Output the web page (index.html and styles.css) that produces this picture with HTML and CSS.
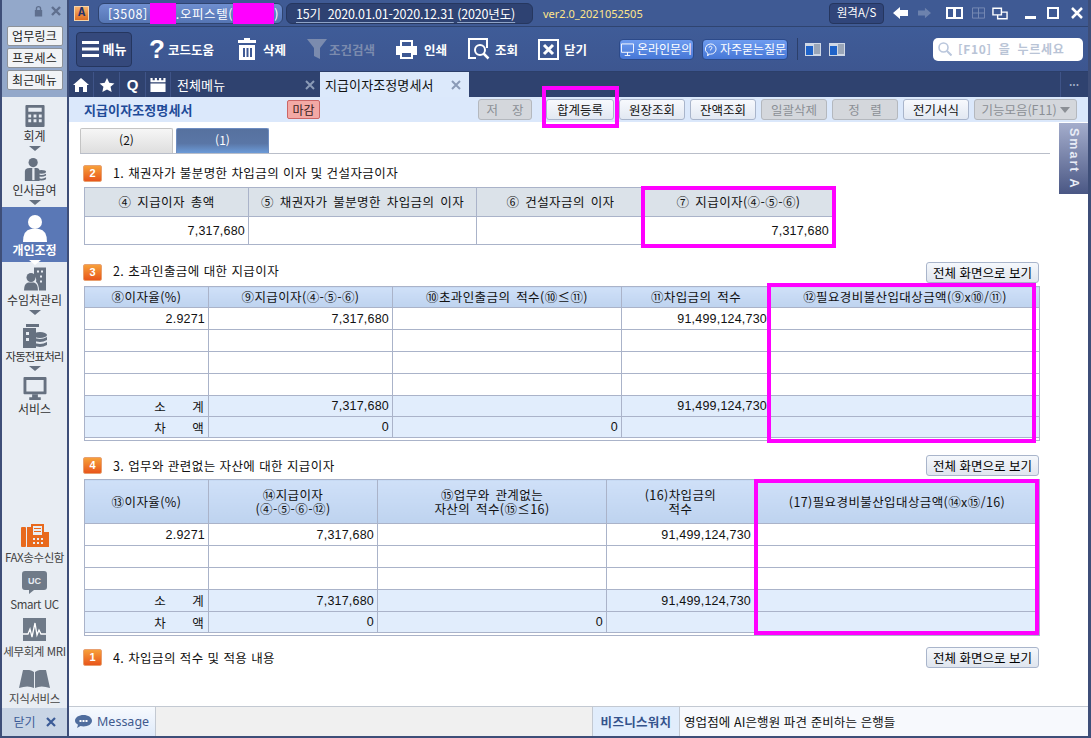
FILE: index.html
```html
<!DOCTYPE html>
<html lang="ko">
<head>
<meta charset="utf-8">
<title>지급이자조정명세서</title>
<link rel="stylesheet" href="styles.css">
</head>
<body>
<div class="app">
  <aside class="side">
    <div class="side-top">
      <div class="side-ctl">
        <svg class="i-lock" viewBox="0 0 12 12"><path d="M3 5V3.500a3 3 0 0 1 6 0V5h1v7H2V5zm1.500 0h3V3.500a1.500 1.500 0 0 0-3 0z"/></svg>
        <svg class="i-cross" viewBox="0 0 10 10"><path d="M1 1l8 8M9 1L1 9"/></svg>
      </div>
      <button class="side-btn">업무링크</button>
      <button class="side-btn">프로세스</button>
      <button class="side-btn">최근메뉴</button>
    </div>
    <nav class="side-nav">
      <div class="nav h-48">
        <svg class="ni ni-calc" viewBox="0 0 20 23"><path fill-rule="evenodd" d="M1 0h18a1 1 0 0 1 1 1v21a1 1 0 0 1-1 1H1a1 1 0 0 1-1-1V1a1 1 0 0 1 1-1zm2 3v4h14V3zm0 7v3h3v-3zm5.500 0v3h3v-3zm5.500 0v3h3v-3zM3 15v3h3v-3zm5.500 0v3h3v-3zm5.500 0v3h3v-3z"/></svg>
        <span class="nav-t">회계</span><i class="tri"></i>
      </div>
      <div class="nav h-59">
        <svg class="ni ni-person" viewBox="0 0 24 25"><circle cx="10" cy="5" r="5"/><path d="M1 25V15q0-4 5-4h8q3 0 3 4v10z"/><path fill="#e8edf3" d="M9 11h2.500v13H9z"/><ellipse cx="19" cy="15" rx="5" ry="2"/><path d="M14 17q5 3 10 0v2q-5 3-10 0zm0 4q5 3 10 0v2q-5 3-10 0z"/></svg>
        <span class="nav-t">인사급여</span><i class="tri"></i>
      </div>
      <div class="nav nav-on">
        <svg class="ni ni-user" viewBox="0 0 24 27"><circle cx="12" cy="7" r="7"/><path d="M0 27q0-12 8-13h8q8 1 8 13z"/></svg>
        <span class="nav-t">개인조정</span><i class="tri"></i>
      </div>
      <div class="nav h-60">
        <svg class="ni ni-biz" viewBox="0 0 22 23"><circle cx="7" cy="10" r="4.500"/><path d="M0 23q0-7 4-8h6q4 1 4 8z"/><path fill-rule="evenodd" d="M10 0h12v23h-7q0-6-3-9 1-3-2-6zm3 3v2h2V3zm4 0v2h2V3zm-1 5v2h2V8zm0 5v2h2v-2z"/></svg>
        <span class="nav-t">수임처관리</span><i class="tri"></i>
      </div>
      <div class="nav h-53">
        <svg class="ni ni-db" viewBox="0 0 24 24"><path d="M3 0h13v3H3z"/><path fill-rule="evenodd" d="M0 4h13v20H0zM3 8v3h3V8zm0 6v3h3v-3z"/><ellipse cx="17" cy="11" rx="7" ry="3"/><path d="M10 13q7 4 14 0v3q-7 4-14 0zm0 5q7 4 14 0v3q-7 4-14 0z"/></svg>
        <span class="nav-t nav-wide">자동전표처리</span><i class="tri"></i>
      </div>
      <div class="nav nav-svc">
        <svg class="ni ni-mon" viewBox="0 0 24 24"><path fill-rule="evenodd" d="M1 0h22a1 1 0 0 1 1 1v16a1 1 0 0 1-1 1H1a1 1 0 0 1-1-1V1a1 1 0 0 1 1-1zm2 3v12h18V3z"/><path d="M9 18h6v3h3v3H6v-3h3z"/></svg>
        <span class="nav-t">서비스</span>
      </div>
    </nav>
    <div class="side-low">
      <div class="low">
        <svg class="li li-fax" viewBox="0 0 28 23"><rect width="5" height="20" y="3" rx="1"/><path fill-rule="evenodd" d="M6 3h4V0h13v8h5v15H6zM12 2v9h9V2zM13 4h7v1h-7zm0 3h7v1h-7zm-1 7v2h2v-2zm4 0v2h2v-2zm4 0v2h2v-2zm-8 4v2h2v-2zm4 0v2h2v-2zm4 0v2h2v-2z"/></svg>
        <span class="low-t">FAX송수신함</span>
      </div>
      <div class="low">
        <svg class="li li-uc" viewBox="0 0 25 23"><path d="M3 0h19a3 3 0 0 1 3 3v13a3 3 0 0 1-3 3H12l-5 4v-4H3a3 3 0 0 1-3-3V3a3 3 0 0 1 3-3z"/><text x="12.500" y="13" class="uc-t">UC</text></svg>
        <span class="low-t">Smart UC</span>
      </div>
      <div class="low">
        <svg class="li li-mri" viewBox="0 0 23 23"><rect width="23" height="23" fill="#6f7a88"/><path d="M0 16h5l2-5 2 8 3-14 2 12 2-5 2 4h5" fill="none" stroke="#fff" stroke-width="1.300"/></svg>
        <span class="low-t">세무회계 MRI</span>
      </div>
      <div class="low">
        <svg class="li li-book" viewBox="0 0 31 18"><path d="M4 0q7-1 11 2v16q-6-3-15 0zM27 0q-7-1-11 2v16q6-3 15 0z"/></svg>
        <span class="low-t">지식서비스</span>
      </div>
    </div>
    <div class="side-close">닫기 <svg class="i-x2" viewBox="0 0 10 10"><path d="M1 1l8 8M9 1L1 9"/></svg></div>
  </aside>

  <main class="main">
    <header class="title">
      <span class="logo">A</span>
      <div class="pill pill-a">[3508]<i class="mask mask-a"></i>.오피스텔(<i class="mask mask-b"></i>)</div>
      <div class="pill pill-b"><u>15기&nbsp; 2020.01.01-2020.12.31</u>&nbsp; <u>(2020년도)</u></div>
      <span class="ver">ver2.0_2021052505</span>
      <button class="as">원격A/S</button>
      <div class="winbar">
        <svg class="w-ic" viewBox="0 0 15 12"><path d="M0 6l7-6v3h8v6H7v3z"/></svg>
        <svg class="w-ic w-off" viewBox="0 0 15 12"><path d="M15 6L8 0v3H0v6h8v3z"/></svg>
        <svg class="w-ic w-book" viewBox="0 0 17 13"><path fill="none" stroke="#fff" stroke-width="2" d="M1 1h7v10H1zM9 1h7v10H9z"/></svg>
        <svg class="w-ic w-grid" viewBox="0 0 14 12"><path fill="none" stroke="#7a8db5" d="M.5.500h13v11H.5zM.5 6h13M7 .5v11"/></svg>
        <svg class="w-ic w-win" viewBox="0 0 17 13"><path fill="none" stroke="#fff" stroke-width="1.500" d="M1 1h9v7H1zM10 5h6v7H6V8"/></svg>
        <svg class="w-ic w-min" viewBox="0 0 11 12"><rect y="9" width="11" height="3" fill="#fff"/></svg>
        <svg class="w-ic w-max" viewBox="0 0 12 12"><path fill="none" stroke="#fff" stroke-width="2" d="M1 1h10v10H1z"/></svg>
        <svg class="w-ic w-close" viewBox="0 0 12 12"><path fill="none" stroke="#fff" stroke-width="2.500" d="M1 1l10 10M11 1L1 11"/></svg>
      </div>
    </header>

    <div class="toolbar">
      <button class="menu-btn">
        <svg class="t-ham" viewBox="0 0 17 16"><path d="M0 0h17v3H0zM0 6.500h17v3H0zM0 13h17v3H0z"/></svg>메뉴
      </button>
      <div class="tool t-89"><span class="qmark">?</span>코드도움</div>
      <div class="tool t-69">
        <svg class="t-ic t-trash" viewBox="0 0 18 22"><path fill-rule="evenodd" d="M6 0h6v2h6v3H0V2h6zM1 7h16v15H1zm4 3v9h2v-9zm3.500 0v9h2v-9zm3.500 0v9h2v-9z"/></svg>삭제
      </div>
      <div class="tool t-89 tool-off">
        <svg class="t-ic t-fun" viewBox="0 0 20 20"><path d="M0 0h20l-7 9v11l-6-3V9z"/></svg>조건검색
      </div>
      <div class="tool t-72">
        <svg class="t-ic t-prn" viewBox="0 0 21 19"><path fill-rule="evenodd" d="M4 0h13v6h4v9h-4v4H4v-4H0V6h4zm2 2v4h9V2zm0 11v4h9v-4z"/></svg>인쇄
      </div>
      <div class="tool t-70">
        <svg class="t-ic t-zoom" viewBox="0 0 22 22"><path fill="none" stroke="#fff" stroke-width="2" d="M8 20H1V1h18v9"/><circle cx="12" cy="12" r="5" fill="none" stroke="#fff" stroke-width="2"/><path stroke="#fff" stroke-width="2.500" d="M15.500 15.500l5 5"/></svg>조회
      </div>
      <div class="tool t-81">
        <svg class="t-ic t-close" viewBox="0 0 21 21"><path fill="none" stroke="#fff" stroke-width="2" d="M1 1h19v19H1z"/><path fill="none" stroke="#fff" stroke-width="3" d="M6 6l9 9M15 6l-9 9"/></svg>닫기
      </div>
      <button class="blue-btn b-online">
        <svg class="b-ic" viewBox="0 0 14 14"><path fill="none" stroke="#fff" d="M.5 1h13v9H.5zM7 10v3M4 13.500h6"/></svg>온라인문의
      </button>
      <button class="blue-btn b-faq">
        <svg class="b-ic" viewBox="0 0 14 14"><path fill="none" stroke="#fff" d="M7 1a6 5.500 0 0 1 0 11H5l-1 2v-3A6 5.500 0 0 1 7 1z"/><path fill="none" stroke="#fff" d="M5.500 5a1.500 1.500 0 1 1 2 1.500L7 8"/></svg>자주묻는질문
      </button>
      <i class="tb-sep"></i>
      <svg class="mini" viewBox="0 0 16 13"><rect width="16" height="13" fill="#cfd8e6"/><rect x="1" y="3" width="7" height="9" fill="#1e62c8"/><rect x="9" y="1" width="6" height="10" fill="#9aa6b8"/></svg>
      <svg class="mini" viewBox="0 0 16 13"><rect width="16" height="13" fill="#cfd8e6"/><rect x="1" y="3" width="7" height="9" fill="#1e62c8"/><rect x="9" y="1" width="6" height="10" fill="#9aa6b8"/></svg>
      <div class="search">
        <svg class="s-ic" viewBox="0 0 14 14"><circle cx="5.500" cy="5.500" r="4.500" fill="none" stroke="#b9c6dc" stroke-width="1.600"/><path d="M9 9l4.500 4.500" stroke="#b9c6dc" stroke-width="2"/></svg>
        [F10] 을 누르세요
      </div>
    </div>

    <div class="tabs">
      <span class="tab-ic ti-1"><svg viewBox="0 0 16 14"><path d="M8 0l8 7h-2v7H10V9H6v5H2V7H0z"/></svg></span>
      <span class="tab-ic ti-2"><svg viewBox="0 0 16 15"><path d="M8 0l2.400 5.200 5.600.6-4.200 3.700 1.200 5.500L8 12.200 3 15l1.200-5.500L0 5.800l5.600-.6z"/></svg></span>
      <span class="tab-ic ti-3 tab-q">Q</span>
      <span class="tab-ic ti-4"><svg viewBox="0 0 14 13"><path fill-rule="evenodd" d="M0 0h2v2h2V0h2v2h2V0h2v2h2V0h2v13H0zM0 4v1h14V4z"/></svg></span>
      <div class="tab tab-plain"><span>전체메뉴</span><svg class="tab-x" viewBox="0 0 10 10"><path d="M1 1l8 8M9 1L1 9"/></svg></div>
      <div class="tab tab-on"><span>지급이자조정명세서</span><svg class="tab-x" viewBox="0 0 10 10"><path d="M1 1l8 8M9 1L1 9"/></svg></div>
      <div class="tab-more">•••</div>
    </div>

    <div class="head">
      <h1 class="head-t">지급이자조정명세서</h1>
      <span class="badge-close">마감</span>
      <div class="head-btns">
        <button class="hb hb-54 off">저 &nbsp; &nbsp;장</button>
        <button class="hb hb-68 m-14">합계등록</button>
        <button class="hb hb-66">원장조회</button>
        <button class="hb hb-66">잔액조회</button>
        <button class="hb hb-66 off">일괄삭제</button>
        <button class="hb hb-66 off">정 &nbsp; 렬</button>
        <button class="hb hb-66">전기서식</button>
        <button class="hb hb-103 off">기능모음(F11)<i class="caret"></i></button>
      </div>
    </div>

    <section class="content">
      <div class="subtabs">
        <div class="st">(2)</div>
        <div class="st st-on">(1)</div>
      </div>

      <div class="sec-head s1">
        <span class="num">2</span><h2>1. 채권자가 불분명한 차입금의 이자 및 건설자금이자</h2>
      </div>
      <table class="grid g1">
        <colgroup><col class="c164"><col class="c228"><col class="c168"><col class="c188"></colgroup>
        <tr class="r29 th-gray"><th>④ 지급이자 총액</th><th>⑤ 채권자가 불분명한 차입금의 이자</th><th>⑥ 건설자금의 이자</th><th>⑦ 지급이자(④-⑤-⑥)</th></tr>
        <tr class="r28"><td class="n">7,317,680</td><td></td><td></td><td class="n">7,317,680</td></tr>
      </table>

      <div class="sec-head s2">
        <span class="num">3</span><h2>2. 초과인출금에 대한 지급이자</h2><button class="full">전체 화면으로 보기</button>
      </div>
      <table class="grid g2">
        <colgroup><col class="c124"><col class="c184"><col class="c229"><col class="c149"><col></colgroup>
        <tr class="r21 th-blue"><th>⑧이자율(%)</th><th>⑨지급이자(④-⑤-⑥)</th><th>⑩초과인출금의 적수(⑩≤⑪)</th><th>⑪차입금의 적수</th><th>⑫필요경비불산입대상금액(⑨x⑩/⑪)</th></tr>
        <tr class="r22"><td class="n">2.9271</td><td class="n">7,317,680</td><td></td><td class="n">91,499,124,730</td><td></td></tr>
        <tr class="r22"><td></td><td></td><td></td><td></td><td></td></tr>
        <tr class="r22"><td></td><td></td><td></td><td></td><td></td></tr>
        <tr class="r22"><td></td><td></td><td></td><td></td><td></td></tr>
        <tr class="r21 sum"><td class="lab"><span>소</span><span>계</span></td><td class="n">7,317,680</td><td></td><td class="n">91,499,124,730</td><td></td></tr>
        <tr class="r21 sum"><td class="lab"><span>차</span><span>액</span></td><td class="n">0</td><td class="n">0</td><td></td><td></td></tr>
        <tr class="end"><td colspan="5"></td></tr>
      </table>

      <div class="sec-head s3">
        <span class="num">4</span><h2>3. 업무와 관련없는 자산에 대한 지급이자</h2><button class="full">전체 화면으로 보기</button>
      </div>
      <table class="grid g3">
        <colgroup><col class="c124"><col class="c169"><col class="c229"><col class="c148"><col></colgroup>
        <tr class="r44 th-blue"><th>⑬이자율(%)</th><th>⑭지급이자<br>(④-⑤-⑥-⑫)</th><th>⑮업무와 관계없는<br>자산의 적수(⑮≤16)</th><th>(16)차입금의<br>적수</th><th>(17)필요경비불산입대상금액(⑭x⑮/16)</th></tr>
        <tr class="r22"><td class="n">2.9271</td><td class="n">7,317,680</td><td></td><td class="n">91,499,124,730</td><td></td></tr>
        <tr class="r22"><td></td><td></td><td></td><td></td><td></td></tr>
        <tr class="r22"><td></td><td></td><td></td><td></td><td></td></tr>
        <tr class="r22 sum"><td class="lab"><span>소</span><span>계</span></td><td class="n">7,317,680</td><td></td><td class="n">91,499,124,730</td><td></td></tr>
        <tr class="r21 sum"><td class="lab"><span>차</span><span>액</span></td><td class="n">0</td><td class="n">0</td><td></td><td></td></tr>
        <tr class="end"><td colspan="5"></td></tr>
      </table>

      <div class="sec-head s4">
        <span class="num">1</span><h2>4. 차입금의 적수 및 적용 내용</h2><button class="full">전체 화면으로 보기</button>
      </div>

      <div class="smart">Smart A</div>
      <i class="mark mark-1"></i>
      <i class="mark mark-2"></i>
      <i class="mark mark-3"></i>
    </section>

    <footer class="status">
      <div class="msg">
        <svg class="msg-ic" viewBox="0 0 17 13"><path d="M8.500 0C13 0 17 2.300 17 5.800s-4 5.700-8.500 5.700c-1 0-2 0-3-.4L2 13l1-3.200C1 8.700 0 7.300 0 5.800 0 2.300 4 0 8.500 0z"/><path fill="#fff" d="M4.500 5h2v2h-2zm3 0h2v2h-2zm3 0h2v2h-2z"/></svg>Message
      </div>
      <div class="st-fill"></div>
      <div class="watch">비즈니스워치</div>
      <div class="news">영업점에 AI은행원 파견 준비하는 은행들</div>
    </footer>
    <i class="mark mark-top"></i>
  </main>
</div>
</body>
</html>
```
FILE: styles.css
```css
* { box-sizing: border-box; }
html, body { margin: 0; height: 100%; }
body {
  width: 1091px; height: 738px; overflow: hidden; background: #3e4e78;
  font: 13px/1.2 "Noto Sans CJK KR", "Noto Sans", sans-serif; color: #111;
}
button { font: inherit; padding: 0; cursor: default; }
svg { display: block; flex: none; }
i { font-style: normal; }
h1, h2 { margin: 0; font-weight: 400; font-size: inherit; }

.app { display: flex; height: 738px; padding: 0 3px 2px 2px; }

/* sidebar */
.side { width: 65px; margin-right: 2px; background: #e8edf3; display: flex; flex-direction: column; flex: none; }
.side-top { height: 97px; background: #93a8ca; display: flex; flex-direction: column; align-items: center; gap: 2px; padding-top: 4px; }
.side-ctl { height: 20px; width: 100%; display: flex; justify-content: flex-end; gap: 7px; padding: 1px 6px 0 0; }
.i-lock { width: 11px; height: 12px; fill: #5f6f8e; }
.i-cross { width: 10px; height: 10px; margin-top: 1px; stroke: #5f6f8e; stroke-width: 2.4; fill: none; }
.side-btn { width: 56px; height: 20px; font-size: 12px; line-height: 16px; letter-spacing: .2px; color: #222; background: #f1f3f6; border: 1px solid #8d9299; border-radius: 2px; }
.side-nav { display: flex; flex-direction: column; padding-top: 8px; }
.nav { display: flex; flex-direction: column; align-items: center; color: #333; }
.h-48 { height: 53px; }
.h-59 { height: 49px; }
.h-60 { height: 58px; padding-top: 5px; }
.h-53 { height: 53px; padding-top: 4px; }
.nav-svc { height: 48px; padding-top: 4px; }
.ni { fill: #667180; }
.ni-calc { width: 20px; height: 22px; }
.ni-person { width: 24px; height: 23px; }
.ni-user { width: 24px; height: 27px; fill: #fff; margin-top: 8px; }
.ni-biz { width: 22px; height: 24px; }
.ni-db { width: 24px; height: 24px; }
.ni-mon { width: 24px; height: 23px; }
.nav-t { font-size: 12px; line-height: 14px; margin-top: 2px; white-space: nowrap; }
.nav-wide { letter-spacing: -.9px; font-size: 11.5px; margin-top: 1px; }
.tri { width: 0; height: 0; margin-top: 3px; border: 6px solid transparent; border-top: 5px solid #667180; border-bottom: 0; }
.nav-on { height: 55px; background: #5a78b6; color: #fff; }
.nav-on .nav-t { font-weight: 700; margin-top: 1px; }
.nav-on .tri { border-top-color: #fff; }
.side-low { margin-top: auto; display: flex; flex-direction: column; }
.low { height: 47px; display: flex; flex-direction: column; align-items: center; justify-content: flex-end; padding-bottom: 2px; }
.li { fill: #6f7a88; }
.li-fax { width: 28px; height: 23px; fill: #e8691d; }
.li-uc { width: 25px; height: 23px; }
.li-mri { width: 23px; height: 23px; }
.li-book { width: 31px; height: 18px; }
.low-t { font-size: 11.5px; line-height: 16px; letter-spacing: -.4px; margin-top: 2px; white-space: nowrap; color: #444; }
.uc-t { font: 700 9px "Liberation Sans", sans-serif; fill: #e8edf3; text-anchor: middle; }
.side-close { height: 28px; background: #c9d5e5; color: #3b5a96; display: flex; align-items: center; justify-content: center; gap: 10px; font-size: 12px; }
.i-x2 { width: 10px; height: 10px; stroke: #3b5a96; stroke-width: 2.2; fill: none; }

/* main column */
.main { flex: 1; min-width: 0; position: relative; display: flex; flex-direction: column; background: #fff; }

.title { height: 27px; flex: none; display: flex; align-items: center; background: #3f5a94; border-bottom: 1px solid #2f4470; padding-left: 5px; color: #fff; }
.logo { width: 15px; height: 15px; margin-right: 9px; background: linear-gradient(#f7b26d, #dd6c20); border: 1px solid #f3d4ac; color: #22306a; font: 700 12px/13px "Liberation Mono", monospace; text-align: center; }
.pill { height: 21px; border-radius: 6px; display: flex; align-items: center; white-space: nowrap; font-size: 12.5px; }
.pill-a { width: 185px; background: linear-gradient(#6f8fd0, #5575b4); padding-left: 9px; margin-right: 3px; border: 1px solid #2f4470; letter-spacing: .6px; }
.mask { height: 21px; background: #ff00ff; flex: none; }
.mask-a { width: 26px; margin-left: 2px; }
.mask-b { width: 41px; }
.pill-b { width: 247px; background: #2e4272; padding-left: 9px; border: 1px solid #26375f; letter-spacing: -.15px; }
.pill-b u { text-decoration-color: #8fa4c8; text-underline-offset: 3px; }
.ver { margin-left: 10px; width: 286px; color: #ffe68a; font: 11px "Noto Sans", sans-serif; }
.as { width: 55px; height: 21px; background: #30457a; color: #fff; border: 1px solid #25365f; border-radius: 4px; font-size: 11.5px; white-space: nowrap; }
.winbar { display: flex; align-items: center; margin-left: 9px; }
.w-ic { width: 15px; height: 12px; fill: #fff; margin-right: 10px; }
.w-off { fill: #6d82ad; width: 13px; margin-right: 15px; }
.w-book { width: 17px; height: 13px; margin-right: 9px; }
.w-grid { width: 13px; margin-right: 7px; }
.w-win { width: 16px; height: 13px; margin-right: 17px; }
.w-min { width: 11px; margin-right: 11px; }
.w-max { width: 12px; margin-right: 12px; }
.w-close { width: 12px; margin-right: 0; }

.toolbar { height: 45px; flex: none; display: flex; align-items: center; padding-left: 7px; background: linear-gradient(#3f5c98, #3d5690); border-bottom: 1px solid #2c3f6a; color: #fff; font-weight: 700; white-space: nowrap; }
.menu-btn { width: 56px; height: 35px; margin-right: 17px; background: #35497c; border: 1px solid #25365f; border-radius: 4px; color: #fff; font-weight: 700; display: flex; align-items: center; justify-content: center; gap: 4px; font-size: 13px; }
.t-ham { width: 17px; height: 16px; fill: #fff; }
.tool { display: flex; align-items: center; gap: 7px; font-size: 12.5px; flex: none; }
.t-89 { width: 89px; }
.t-69 { width: 69px; }
.t-72 { width: 72px; }
.t-70 { width: 70px; gap: 5px; }
.t-81 { width: 81px; gap: 5px; }
.tool-off { color: #7b8bae; gap: 2px; }
.qmark { font: 700 26px/30px "Liberation Sans", sans-serif; width: 12px; text-align: center; }
.t-ic { fill: #fff; }
.t-trash { width: 18px; height: 22px; }
.t-fun { width: 20px; height: 20px; fill: #7b8bae; }
.t-prn { width: 21px; height: 19px; }
.t-zoom { width: 22px; height: 22px; }
.t-close { width: 21px; height: 21px; }
.blue-btn { height: 21px; display: flex; align-items: center; justify-content: center; gap: 3px; background: linear-gradient(#6e9cf0, #4677d6); color: #fff; border: 1px solid #2c4a8a; border-radius: 4px; font-size: 12px; font-weight: 400; white-space: nowrap; }
.b-ic { width: 13px; height: 13px; }
.b-online { width: 75px; margin-right: 8px; }
.b-faq { width: 86px; }
.tb-sep { width: 1px; height: 22px; background: #2c3f6a; margin: 0 7px 0 9px; }
.mini { width: 16px; height: 13px; margin-right: 8px; }
.search { width: 150px; height: 23px; margin-left: 80px; background: #fff; border-radius: 5px; display: flex; align-items: center; gap: 6px; padding-left: 5px; color: #b9c4d6; font-size: 12px; font-weight: 700; letter-spacing: .7px; word-spacing: 3px; }
.s-ic { width: 14px; height: 14px; }

.tabs { height: 25px; flex: none; display: flex; background: #2f426f; color: #fff; align-items: stretch; }
.tab-ic { width: 26px; display: flex; align-items: center; justify-content: center; border-right: 1px solid #3f5488; }
.tab-ic svg { width: 16px; height: 14px; fill: #fff; }
.ti-1 { width: 25px; }
.ti-4 { width: 25px; }
.tab-q { font: 700 15px "Liberation Sans", sans-serif; }
.tab { width: 149px; display: flex; align-items: center; justify-content: space-between; padding: 0 5px 0 6px; font-size: 13px; letter-spacing: .1px; }
.tab-on { background: #dce9fb; color: #111; padding-left: 5px; padding-right: 8px; }
.tab-x { width: 10px; height: 10px; stroke: #8a9ab6; stroke-width: 2; fill: none; }
.tab-more { margin-left: auto; width: 28px; border-left: 1px solid #3f5488; font-size: 7px; letter-spacing: 1px; color: #a8b5cd; display: flex; align-items: center; justify-content: center; }

.head { height: 25px; flex: none; display: flex; align-items: center; background: #dbe8fb; }
.head-t { margin-left: 15px; width: 203px; color: #1f4b98; font-weight: 700; letter-spacing: .1px; font-size: 13px; white-space: nowrap; }
.badge-close { width: 33px; height: 19px; background: #f3a9a5; border: 1px solid #c66; border-radius: 2px; font-size: 12px; line-height: 17px; text-align: center; color: #3a2020; }
.head-btns { display: flex; margin-left: 158px; gap: 5px; }
.hb { height: 21px; background: linear-gradient(#f7f9fd, #e2e8f2); border: 1px solid #a9b5cb; border-radius: 3px; font-size: 12.5px; color: #111; white-space: nowrap; display: flex; align-items: center; justify-content: center; }
.hb.off { background: #d4d7dc; color: #8b8f95; border-color: #b4b8be; }
.hb-54 { width: 54px; }
.hb-68 { width: 68px; }
.hb-66 { width: 66px; }
.hb-103 { width: 103px; gap: 3px; }
.m-14 { margin-left: 9px; }
.caret { width: 0; height: 0; border: 5px solid transparent; border-top: 6px solid #8b8f95; border-bottom: 0; }

/* content */
.content { flex: 1; min-height: 0; position: relative; padding: 6px 0 0 15px; background: #fff; }
.subtabs { display: flex; gap: 3px; margin-left: -4px; width: 970px; height: 26px; border-bottom: 1px solid #b9bec9; }
.st { width: 93px; height: 25px; background: linear-gradient(#f6f6f6, #dedede); border: 1px solid #c4c4c4; border-bottom: 0; border-radius: 2px 2px 0 0; text-align: center; line-height: 22px; font-size: 12px; }
.st-on { background: linear-gradient(#56719f 0, #5a76a6 60%, #6c9bd8); border-color: #6d8cc0; color: #fff; }

.sec-head { height: 20px; width: 955px; display: flex; align-items: center; margin-bottom: 4px; }
.s1 { margin-top: 9px; }
.s1 h2 { margin-bottom: 2px; }
.s2 { margin-top: 17px; }
.s2 h2 { margin-bottom: 3px; }
.s3 { margin-top: 14px; }
.s4 { margin-top: 11px; }
.sec-head h2 { font-size: 12.5px; letter-spacing: .42px; margin-left: 11px; white-space: nowrap; }
.num { width: 19px; height: 17px; margin-left: -1px; background: linear-gradient(#f7a03a, #e8561c); border: 1px solid #e8a070; border-radius: 2px; color: #fff; font: 700 11px/15px "Liberation Sans", sans-serif; text-align: center; }
.full { margin-left: auto; width: 113px; height: 21px; background: linear-gradient(#f5f8fc, #dfe5ee); border: 1px solid #a9b5cb; border-radius: 3px; font-size: 12.5px; white-space: nowrap; }

.grid { table-layout: fixed; border-collapse: collapse; width: 956px; }
.g1 { width: 749px; }
.grid th, .grid td { border: 1px solid #aab3c9; padding: 0; font-size: 12.5px; font-weight: 400; }
.grid th { text-align: center; line-height: 14px; letter-spacing: .4px; word-spacing: 2px; white-space: nowrap; overflow: hidden; }
.c164 { width: 164px; }
.c228 { width: 228px; }
.c168 { width: 168px; }
.c188 { width: 188px; }
.c124 { width: 124px; }
.c184 { width: 184px; }
.c229 { width: 229px; }
.c149 { width: 149px; }
.c169 { width: 169px; }
.c148 { width: 148px; }
.r21 { height: 21px; }
.r22 { height: 22px; }
.r28 { height: 28px; }
.r29 { height: 29px; }
.r44 { height: 44px; }
.th-gray th { background: #dbe2e9; }
.th-blue th { background: linear-gradient(#cfe0f8, #bed3ef); }
.sum td { background: #e1edfc; }
.grid td.n { text-align: right; padding-right: 3px; font: 12.5px/14px "Liberation Sans", sans-serif; letter-spacing: .2px; color: #111; }
.grid td.lab { padding: 0 4px 0 0; }
.lab { text-align: right; }
.lab span { display: inline-block; width: 12px; text-align: center; }
.lab span + span { margin-left: 26px; }
.end td { height: 3px; background: #fff; }

.smart { position: absolute; right: 0; top: 1px; width: 29px; height: 71px; background: linear-gradient(#a4adcc, #4a5784); color: #e8ecf6; font: 700 12.5px/29px "Liberation Sans", sans-serif; letter-spacing: 2px; writing-mode: vertical-rl; text-align: center; }

.mark { position: absolute; border: 4px solid #ff00ff; pointer-events: none; }
.mark-1 { left: 572px; top: 64px; width: 195px; height: 62px; }
.mark-2 { left: 698px; top: 161px; width: 269px; height: 160px; }
.mark-3 { left: 685px; top: 357px; width: 285px; height: 156px; }
.mark-top { left: 473px; top: 86px; width: 77px; height: 42px; }

/* status */
.status { height: 30px; flex: none; display: flex; align-items: stretch; border-top: 1px solid #c3c9d2; background: #f0f0f0; }
.msg { width: 87px; padding-left: 6px; background: linear-gradient(#f7fafe, #dfeafa); border-right: 1px solid #c3c9d2; display: flex; align-items: center; gap: 5px; color: #3f5a8e; font: 400 12.5px "Noto Sans", sans-serif; }
.msg-ic { width: 17px; height: 13px; fill: #4f6d9e; }
.st-fill { flex: 1; }
.watch { width: 88px; background: #e1edfc; border-left: 1px solid #c3c9d2; border-right: 1px solid #c3c9d2; color: #34538c; font-weight: 700; letter-spacing: .3px; font-size: 12.5px; display: flex; align-items: center; justify-content: center; white-space: nowrap; }
.news { width: 408px; background: #f7f9fd; padding-left: 4px; font-size: 12.5px; letter-spacing: .1px; display: flex; align-items: center; white-space: nowrap; }
```
